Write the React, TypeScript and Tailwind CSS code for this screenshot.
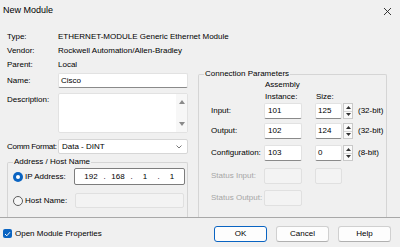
import React from 'react';

// Windows-style "New Module" dialog

const boxBase = 'bg-white border border-[#e2e2e2] border-b-[#8a8a8a] rounded-[2px]';
const disabledBox = 'bg-[#f3f3f3] border border-[#e0e0e0] rounded-[2px]';

function InfoRow({ label, value, h }: { label: string; value: string; h: string }) {
  return (
    <div className={`flex items-center ${h}`}>
      <span className="w-[51px] shrink-0">{label}</span>
      <span className="whitespace-nowrap">{value}</span>
    </div>
  );
}

function Spinner() {
  return (
    <div className="ml-[1px] w-[10px] h-[16px] flex flex-col border border-[#c9c9c9] bg-[#fafafa]">
      <div className="flex-1 flex items-center justify-center border-b border-[#d6d6d6]">
        <svg width="5" height="3" viewBox="0 0 5 3"><path d="M0 3 L2.5 0 L5 3 Z" fill="#333" /></svg>
      </div>
      <div className="flex-1 flex items-center justify-center">
        <svg width="5" height="3" viewBox="0 0 5 3"><path d="M0 0 L2.5 3 L5 0 Z" fill="#333" /></svg>
      </div>
    </div>
  );
}

function ParamRow({ label, inst, size, bits, mt, disabled, showSize = true }: {
  label: string; inst?: string; size?: string; bits?: string; mt: string; disabled?: boolean; showSize?: boolean;
}) {
  return (
    <div className={`flex items-center h-[16px] ${mt}`}>
      <span className={`w-[53px] shrink-0 whitespace-nowrap ${disabled ? 'text-[#a6a6a6]' : ''}`}>{label}</span>
      <div className={`w-[38px] h-[16px] pl-[3px] flex items-center ${disabled ? disabledBox : boxBase}`}>{inst}</div>
      {showSize && (
        <>
          <div className={`ml-[13px] w-[27px] h-[16px] pl-[2px] flex items-center ${disabled ? disabledBox : boxBase}`}>{size}</div>
          {!disabled && <Spinner />}
          {bits && <span className="ml-[5px] whitespace-nowrap">{bits}</span>}
        </>
      )}
    </div>
  );
}

function Radio({ checked }: { checked?: boolean }) {
  return checked ? (
    <span className="w-[10px] h-[10px] rounded-full bg-[#0a64c2] flex items-center justify-center">
      <span className="w-[4px] h-[4px] rounded-full bg-white" />
    </span>
  ) : (
    <span className="w-[10px] h-[10px] rounded-full border border-[#5c5c5c] bg-[#f7f7f7]" />
  );
}

export default function App() {
  return (
    <div className="w-[400px] h-[247px] bg-[#f0f0f0] flex flex-col overflow-hidden text-[8px] text-black font-['Liberation_Sans',Arial,sans-serif]">
      {/* Title bar */}
      <div className="h-[22px] flex items-center justify-between pl-[3px] pr-[9px] shrink-0">
        <span className="text-[9px]">New Module</span>
        <svg width="7" height="7" viewBox="0 0 7 7"><path d="M0 0 L7 7 M7 0 L0 7" stroke="#222" strokeWidth="0.9" /></svg>
      </div>

      {/* Body */}
      <div className="flex-1 flex pl-[7px] min-h-0">
        {/* Left column */}
        <div className="w-[181px] flex flex-col pt-[8px]">
          <InfoRow label="Type:" value="ETHERNET-MODULE Generic Ethernet Module" h="h-[14px]" />
          <InfoRow label="Vendor:" value="Rockwell Automation/Allen-Bradley" h="h-[14px]" />
          <InfoRow label="Parent:" value="Local" h="h-[13px]" />

          <div className="flex items-center h-[15px] mt-[2px]">
            <span className="w-[51px] shrink-0">Name:</span>
            <div className={`w-[130px] h-[15px] pl-[2px] flex items-center ${boxBase}`}>Cisco</div>
          </div>

          <div className="flex mt-[5px] h-[40px]">
            <span className="w-[51px] shrink-0 pt-[1px]">Description:</span>
            <div className="w-[130px] h-[40px] bg-white border border-[#e2e2e2] rounded-[2px] flex justify-end">
              <div className="w-[11px] bg-[#f7f7f7] flex flex-col justify-between items-center py-[6px]">
                <svg width="6" height="4" viewBox="0 0 6 4"><path d="M0 4 L3 0 L6 4 Z" fill="#8a8a8a" /></svg>
                <svg width="6" height="4" viewBox="0 0 6 4"><path d="M0 0 L3 4 L6 0 Z" fill="#8a8a8a" /></svg>
              </div>
            </div>
          </div>

          <div className="flex items-center h-[15px] mt-[6px]">
            <span className="w-[51px] shrink-0 whitespace-nowrap tracking-[-0.3px]">Comm Format:</span>
            <div className="w-[130px] h-[15px] pl-[3px] pr-[5px] flex items-center justify-between bg-white border border-[#d6d6d6] rounded-[2px]">
              <span>Data - DINT</span>
              <svg width="6" height="4" viewBox="0 0 6 4"><path d="M0.5 0.5 L3 3 L5.5 0.5" fill="none" stroke="#555" strokeWidth="0.8" /></svg>
            </div>
          </div>

          <fieldset className="flex-1 mt-[3px] border border-b-0 border-[#d5d5d5] rounded-t-[2px] min-h-0">
            <legend className="ml-[5px] px-[1px] leading-[10px]">Address / Host Name</legend>
            <div className="flex flex-col pl-[5px]">
              <div className="flex items-center h-[17px] mt-[1px]">
                <Radio checked />
                <span className="ml-[2px] w-[49px]">IP Address:</span>
                <div className="w-[111px] h-[17px] pl-[6px] flex items-center bg-white border border-[#7d7d7d] rounded-[2px]">
                  <span className="w-[20px] text-center">192</span>
                  <span className="w-[7px] text-center">.</span>
                  <span className="w-[20px] text-center">168</span>
                  <span className="w-[7px] text-center">.</span>
                  <span className="w-[20px] text-center">1</span>
                  <span className="w-[7px] text-center">.</span>
                  <span className="w-[20px] text-center">1</span>
                </div>
              </div>
              <div className="flex items-center h-[15px] mt-[8px]">
                <Radio />
                <span className="ml-[2px] w-[50px]">Host Name:</span>
                <div className={`w-[109px] h-[15px] ${disabledBox}`} />
              </div>
            </div>
          </fieldset>
        </div>

        {/* Right column */}
        <div className="w-[189px] ml-[10px] flex flex-col pt-[47px]">
          <fieldset className="flex-1 border border-b-0 border-[#d5d5d5] rounded-t-[2px] min-h-0">
            <legend className="ml-[5px] px-[1px] leading-[10px]">Connection Parameters</legend>
            <div className="flex flex-col pl-[12px]">
              <div className="flex items-end h-[24px] leading-[12px]">
                <span className="w-[53px] shrink-0" />
                <span className="w-[38px] pl-[1px]">Assembly<br />Instance:</span>
                <span className="ml-[13px] pl-[1px]">Size:</span>
              </div>
              <ParamRow label="Input:" inst="101" size="125" bits="(32-bit)" mt="mt-0" />
              <ParamRow label="Output:" inst="102" size="124" bits="(32-bit)" mt="mt-[4px]" />
              <ParamRow label="Configuration:" inst="103" size="0" bits="(8-bit)" mt="mt-[6px]" />
              <ParamRow label="Status Input:" mt="mt-[7px]" disabled />
              <ParamRow label="Status Output:" mt="mt-[6px]" disabled showSize={false} />
            </div>
          </fieldset>
        </div>
      </div>

      {/* Bottom bar */}
      <div className="h-[30px] shrink-0 border-t border-[#a8a8a8] flex items-center justify-between pl-[3px] pr-[9px] pt-[2px]">
        <div className="flex items-center">
          <span className="w-[9px] h-[9px] rounded-[2px] bg-[#0a64c2] flex items-center justify-center">
            <svg width="7" height="6" viewBox="0 0 7 6"><path d="M1 3 L2.8 4.8 L6 1.2" fill="none" stroke="white" strokeWidth="1" /></svg>
          </span>
          <span className="ml-[3px]">Open Module Properties</span>
        </div>
        <div className="flex gap-[9px]">
          <button className="w-[53px] h-[16px] bg-[#fdfdfd] border border-[#0a64c2] rounded-[3px] text-[8px]">OK</button>
          <button className="w-[53px] h-[16px] bg-[#fdfdfd] border border-[#d0d0d0] border-b-[#b0b0b0] rounded-[3px] text-[8px]">Cancel</button>
          <button className="w-[53px] h-[16px] bg-[#fdfdfd] border border-[#d0d0d0] border-b-[#b0b0b0] rounded-[3px] text-[8px]">Help</button>
        </div>
      </div>
    </div>
  );
}
